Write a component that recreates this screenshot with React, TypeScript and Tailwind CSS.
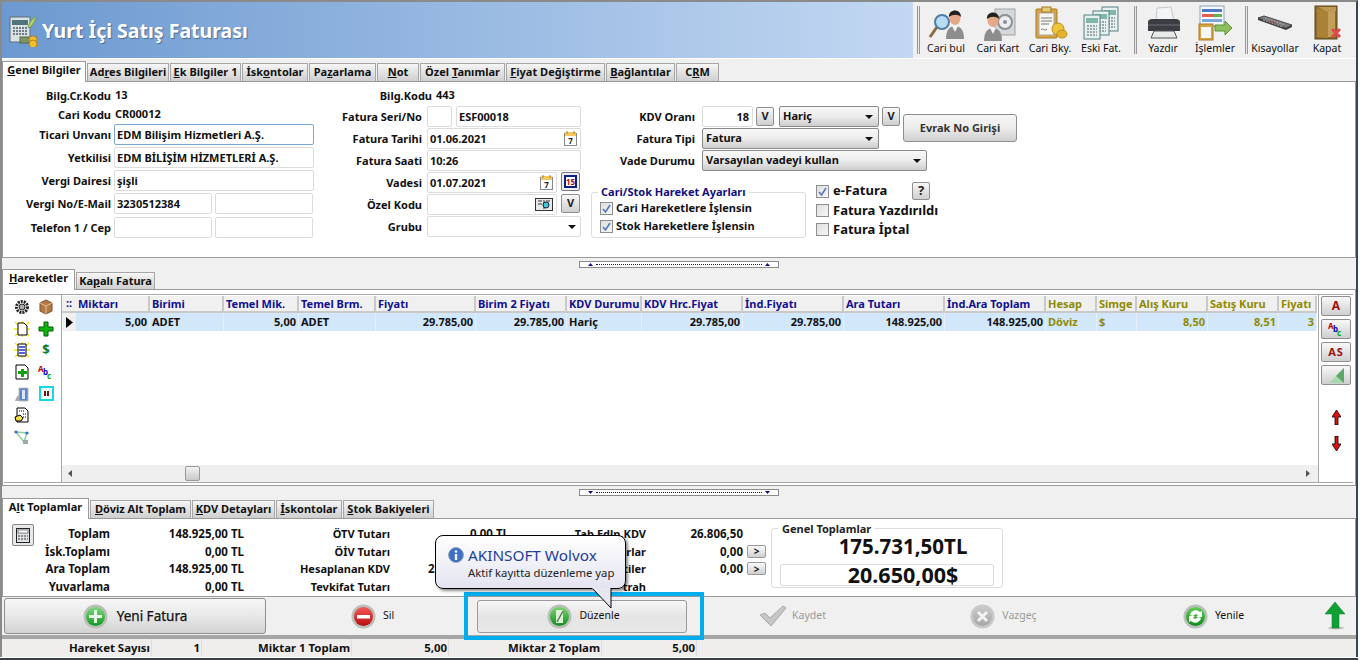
import React from "react";

const U = ({ children }: { children: React.ReactNode }) => <span className="underline">{children}</span>;

const Person = ({ x = 0 }: { x?: number }) => (
  <g transform={`translate(${x} 0)`}>
    <path d="M10 34c0-8 3-13 9-13s9 5 9 13z" fill="#8d8d8d" />
    <path d="M16 21l3 6 3-6z" fill="#f4f4f4" />
    <ellipse cx="19" cy="13" rx="5.5" ry="7" fill="#e6a988" />
    <path d="M13 12c-1-8 12-9 12 0-3-3-8-3-12 0z" fill="#23201e" />
  </g>
);

const IconCariBul = () => (
  <svg width="36" height="36" viewBox="0 0 36 36"><Person x={8} />
    <circle cx="14" cy="17" r="7" fill="#b9dcf5" stroke="#4f7fa8" strokeWidth="2" />
    <path d="M9 22L2 32" stroke="#8a6a45" strokeWidth="3" /></svg>
);
const IconCariKart = () => (
  <svg width="36" height="36" viewBox="0 0 36 36">
    <rect x="15" y="4" width="20" height="26" fill="#d5d8da" stroke="#9ea3a6" />
    <circle cx="25" cy="17" r="7" fill="#eceeef" stroke="#8c9093" strokeWidth="2" />
    <circle cx="25" cy="17" r="2" fill="#8c9093" />
    <g transform="translate(-6 2)"><Person /></g></svg>
);
const IconCariBky = () => (
  <svg width="36" height="36" viewBox="0 0 36 36">
    <rect x="4" y="4" width="21" height="29" rx="1" fill="#d9a441" stroke="#a87a26" />
    <rect x="7" y="8" width="15" height="22" fill="#f6f6f2" stroke="#aaa" />
    <rect x="10" y="2" width="9" height="5" fill="#e4cc78" stroke="#a87a26" />
    <path d="M9 13h11M9 16h11M9 19h8M9 25c2-3 3 2 6-1" stroke="#777" fill="none" />
    <circle cx="26" cy="24" r="6" fill="#eec53f" stroke="#b98d16" />
    <ellipse cx="30" cy="29" rx="5" ry="4" fill="#e3b52e" stroke="#b98d16" /></svg>
);
const Sheet = ({ x, y }: { x: number; y: number }) => (
  <g transform={`translate(${x} ${y})`}>
    <rect width="16" height="24" fill="#e6f0ee" stroke="#557f86" />
    <rect x="2" y="3" width="12" height="5" fill="#7fb7a8" />
    <path d="M3 11h10M3 14h10M3 17h10M3 20h10" stroke="#4c5f63" strokeDasharray="2 1" />
  </g>
);
const IconEskiFat = () => (
  <svg width="36" height="36" viewBox="0 0 36 36"><Sheet x={19} y={2} /><Sheet x={10} y={6} /><Sheet x={1} y={10} /></svg>
);
const IconYazdir = () => (
  <svg width="36" height="36" viewBox="0 0 36 36">
    <path d="M12 3l14-1 3 14H11z" fill="#f2f4f5" stroke="#c4c8cb" />
    <path d="M3 17c0-2 2-3 4-3h24c2 0 4 1 4 3v9H3z" fill="#3a3d42" />
    <path d="M3 20h32" stroke="#6c7075" />
    <path d="M9 26h20l3 7H6z" fill="#e8e9ea" stroke="#555" /></svg>
);
const IconIslemler = () => (
  <svg width="36" height="36" viewBox="0 0 36 36">
    <rect x="3" y="1" width="24" height="20" fill="#f5f7fb" stroke="#8ba0bd" />
    <rect x="5" y="4" width="20" height="3" fill="#4d79c7" /><rect x="5" y="9" width="12" height="3" fill="#e35d4f" /><rect x="17" y="9" width="8" height="3" fill="#62b14e" /><rect x="5" y="14" width="20" height="3" fill="#7ca7de" />
    <rect x="2" y="19" width="14" height="16" fill="#d9a441" stroke="#a87a26" /><rect x="4" y="22" width="10" height="11" fill="#f6f6f2" />
    <path d="M18 20h10v-4l7 7-7 7v-4H18z" fill="#8dc05c" stroke="#5b8f31" /></svg>
);
const IconKisayol = () => (
  <svg width="36" height="18" viewBox="0 0 36 18">
    <path d="M1 4l6-2 28 9-6 3z" fill="#7b7b7d" stroke="#4d4d4f" />
    <path d="M1 4v2l28 10 6-3v-2l-6 3z" fill="#3c3c3e" />
    <path d="M8 4l20 7M6 6l20 7" stroke="#a9a9ab" strokeDasharray="2 1" /><path d="M13 7l6 2" stroke="#b53a3a" /></svg>
);
const IconKapat = () => (
  <svg width="36" height="36" viewBox="0 0 36 36">
    <rect x="6" y="1" width="22" height="33" fill="#8d6a2a" stroke="#5f471b" />
    <path d="M8 3l11 3v27l-11-1z" fill="#a98238" /><path d="M19 4h7v28h-7z" fill="#c2a05a" /><path d="M9 2h18v4l-8 1z" fill="#bb9a55" />
    <path d="M23 24l8 8M31 24l-8 8" stroke="#e04a4a" strokeWidth="3" /></svg>
);

const TitleIcon = () => (
  <svg width="32" height="34" viewBox="0 0 32 34">
    <rect x="2" y="4" width="20" height="25" fill="#d9e1e4" stroke="#5d7078" />
    <rect x="4" y="7" width="16" height="5" fill="#52747f" />
    <path d="M5 15h14M5 18h14M5 21h14" stroke="#4f5e63" strokeWidth="1.5" strokeDasharray="2 1" />
    <path d="M20 14c2-6 6-9 8-11-1 5-3 9-7 12z" fill="#b8d86e" stroke="#7fa33c" />
    <rect x="12" y="24" width="16" height="6" fill="#7e9466" stroke="#566b42" />
    <circle cx="25" cy="27" r="4" fill="#f2bc2f" stroke="#b5861a" /><circle cx="25" cy="31" r="4" fill="#f2bc2f" stroke="#b5861a" />
  </svg>
);

const Tool = ({ label, w, icon }: { label: string; w: string; icon: React.ReactNode }) => (
  <div className={`flex flex-col items-center ${w}`}>
    <div className="flex h-[36px] items-center justify-center">{icon}</div>
    <span className="text-[10.5px] font-normal leading-[14px] text-[#111] whitespace-nowrap">{label}</span>
  </div>
);
const ToolSep = () => <div className="mx-[2px] h-[48px] w-[3px] shrink-0 border-x border-[#999] bg-[#e6e6e6]" />;

const TopBar = () => (
  <div className="flex h-[57px] border-b border-white">
    <div className="flex flex-1 items-center bg-gradient-to-r from-[#6c99d0] to-[#c3d8f2] pl-[6px]">
      <TitleIcon />
      <span className="ml-[2px] mt-[2px] text-[19.5px] font-bold text-white [text-shadow:1px_1px_1px_#4a6d99]">Yurt İçi Satış Faturası</span>
    </div>
    <div className="flex w-[443px] items-center bg-[#f0f0f0] pl-[2px]">
      <ToolSep />
      <Tool label="Cari bul" w="w-[48px]" icon={<IconCariBul />} />
      <Tool label="Cari Kart" w="w-[56px]" icon={<IconCariKart />} />
      <Tool label="Cari Bky." w="w-[48px]" icon={<IconCariBky />} />
      <Tool label="Eski Fat." w="w-[54px]" icon={<IconEskiFat />} />
      <div className="w-[4px]" />
      <ToolSep />
      <Tool label="Yazdır" w="w-[48px]" icon={<IconYazdir />} />
      <Tool label="İşlemler" w="w-[56px]" icon={<IconIslemler />} />
      <ToolSep />
      <Tool label="Kısayollar" w="w-[50px]" icon={<IconKisayol />} />
      <Tool label="Kapat" w="w-[54px]" icon={<IconKapat />} />
    </div>
  </div>
);

const TabBtn = ({ children, w, active, h = "h-[18px]" }: { children: React.ReactNode; w: string; active?: boolean; h?: string }) =>
  active ? (
    <div className={`relative z-10 -mb-px flex h-[21px] ${w} items-center justify-center border-x border-t border-[#9a9a9a] bg-white pb-[3px] text-[#111] shrink-0`}>{children}</div>
  ) : (
    <div className={`flex ${h} ${w} items-center justify-center border border-b-0 border-[#a6a6a6] bg-gradient-to-b from-[#f6f6f6] to-[#cfcfcf] text-[#111] shrink-0`}>{children}</div>
  );

const Lbl = ({ w, children }: { w: string; children: React.ReactNode }) => (
  <div className={`${w} shrink-0 text-right leading-[21px] whitespace-nowrap`}>{children}</div>
);
const Inp = ({ w, children, focus, right }: { w: string; children?: React.ReactNode; focus?: boolean; right?: boolean }) => (
  <div className={`relative flex h-[21px] ${w} shrink-0 items-center rounded-[2px] border px-[2px] leading-[19px] whitespace-nowrap bg-white ${focus ? "border-[#7aa7d6]" : "border-[#dcdcdc]"} ${right ? "justify-end pr-[3px]" : ""}`}>{children}</div>
);
const VBtn = ({ w = "w-[18px]", h = "h-[19px]", children = "V" }: { w?: string; h?: string; children?: React.ReactNode }) => (
  <div className={`flex ${w} ${h} shrink-0 items-center justify-center rounded-[2px] border border-[#8f8f8f] bg-gradient-to-b from-[#f8f8f8] to-[#cfcfcf] text-[#222]`}>{children}</div>
);
const Sel = ({ w, children }: { w: string; children?: React.ReactNode }) => (
  <div className={`flex h-[21px] ${w} shrink-0 items-center justify-between rounded-[2px] border border-[#8a8a8a] bg-gradient-to-b from-[#f8f8f8] via-[#ececec] to-[#cdcdcd] pl-[3px] pr-[5px] whitespace-nowrap`}>
    <span>{children}</span>
    <svg width="8" height="4" viewBox="0 0 8 4"><path d="M0 0h8L4 4z" fill="#111" /></svg>
  </div>
);
const Cal = ({ day = "7" }: { day?: string }) => (
  <svg width="13" height="15" viewBox="0 0 13 15" className="absolute right-[3px] top-[2px]">
    <rect x=".5" y="2.5" width="12" height="12" fill="#fff" stroke="#888" />
    <rect x="1" y="1" width="11" height="4" fill="#f3c85d" />
    <path d="M3 0v3M10 0v3" stroke="#a7882f" />
    <text x="6.5" y="13" fontSize="8" textAnchor="middle" fill="#222" fontWeight="700">{day}</text>
  </svg>
);
const Chk = ({ on }: { on?: boolean }) => (
  <div className="flex h-[13px] w-[13px] shrink-0 items-center justify-center border border-[#8f8f8f] bg-gradient-to-br from-[#dfdfdf] to-[#f6f6f6]">
    {on && <svg width="9" height="9" viewBox="0 0 9 9"><path d="M1 5l2.5 3L8 1" fill="none" stroke="#5a79b8" strokeWidth="1.6" /></svg>}
  </div>
);

const FormPanel = () => (
  <div className="flex h-[177px] items-start border border-[#9a9a9a] bg-white">
    <div className="w-[312px] shrink-0 pt-[3px]">
      <div className="flex h-[20px] items-center gap-[4px]"><Lbl w="w-[108px]">Bilg.Cr.Kodu</Lbl><span>13</span></div>
      <div className="flex h-[18px] items-center gap-[4px]"><Lbl w="w-[108px]">Cari Kodu</Lbl><span>CR00012</span></div>
      <div className="mt-[1px] flex flex-col gap-[2px]">
        <div className="flex gap-[3px]"><Lbl w="w-[108px]">Ticari Unvanı</Lbl><Inp w="w-[200px]" focus>EDM Bilişim Hizmetleri A.Ş.</Inp></div>
        <div className="flex gap-[3px]"><Lbl w="w-[108px]">Yetkilisi</Lbl><Inp w="w-[200px]">EDM BİLİŞİM HİZMETLERİ A.Ş.</Inp></div>
        <div className="flex gap-[3px]"><Lbl w="w-[108px]">Vergi Dairesi</Lbl><Inp w="w-[200px]">şişli</Inp></div>
        <div className="flex gap-[3px]"><Lbl w="w-[108px]">Vergi No/E-Mail</Lbl><Inp w="w-[98px]">3230512384</Inp><Inp w="w-[98px]" /></div>
        <div className="mt-[1px] flex gap-[3px]"><Lbl w="w-[108px]">Telefon 1 / Cep</Lbl><Inp w="w-[98px]" /><Inp w="w-[98px]" /></div>
      </div>
    </div>
    <div className="w-[267px] shrink-0 pt-[3px]">
      <div className="flex h-[20px] items-center gap-[4px]"><Lbl w="w-[117px]">Bilg.Kodu</Lbl><span>443</span></div>
      <div className="mt-[1px] flex flex-col gap-px">
        <div className="flex gap-[4px]"><Lbl w="w-[108px] pr-px">Fatura Seri/No</Lbl><Inp w="w-[25px]" /><Inp w="w-[125px]">ESF00018</Inp></div>
        <div className="flex gap-[4px]"><Lbl w="w-[108px] pr-px">Fatura Tarihi</Lbl><Inp w="w-[154px]">01.06.2021<Cal /></Inp></div>
        <div className="flex gap-[4px]"><Lbl w="w-[108px] pr-px">Fatura Saati</Lbl><Inp w="w-[154px]">10:26</Inp></div>
        <div className="flex gap-[4px]"><Lbl w="w-[108px] pr-px">Vadesi</Lbl><Inp w="w-[130px]">01.07.2021<Cal /></Inp>
          <div className="flex h-[19px] w-[19px] items-center justify-center rounded-[2px] border border-[#777] bg-[#eee]">
            <div className="flex h-[13px] w-[13px] items-center justify-center border-2 border-[#102080] bg-white text-[8px] leading-none text-[#a01010]">15</div>
          </div>
        </div>
        <div className="flex gap-[4px]"><Lbl w="w-[108px] pr-px">Özel Kodu</Lbl>
          <Inp w="w-[130px]">
            <svg width="18" height="15" viewBox="0 0 18 15" className="absolute right-[3px] top-[2px]"><rect x=".5" y="1.5" width="17" height="12" fill="#e8e8e8" stroke="#333" /><path d="M9 3v9M3 4h4M3 7h4M11 4h4" stroke="#333" /><circle cx="11" cy="8" r="3" fill="#3cc6d8" stroke="#123" /></svg>
          </Inp>
          <VBtn w="w-[19px]" />
        </div>
        <div className="flex gap-[4px]"><Lbl w="w-[108px] pr-px">Grubu</Lbl>
          <div className="flex h-[21px] w-[154px] items-center justify-end rounded-[2px] border border-[#dcdcdc] pr-[4px]"><svg width="8" height="4" viewBox="0 0 8 4"><path d="M0 0h8L4 4z" fill="#111" /></svg></div>
        </div>
      </div>
    </div>
    <div className="pt-[24px]">
      <div className="flex flex-col gap-px">
        <div className="flex h-[21px] items-start">
          <Lbl w="w-[113px]">KDV Oranı</Lbl><div className="w-[7px]" />
          <Inp w="w-[51px]" right>18</Inp><div className="ml-[3px] mt-px"><VBtn w="w-[18px]" /></div>
          <div className="ml-[5px]"><Sel w="w-[100px]">Hariç</Sel></div>
          <div className="ml-[3px] mt-px"><VBtn w="w-[18px]" /></div>
          <div className="ml-[3px] mt-[8px] flex h-[28px] w-[114px] items-center justify-center rounded-[3px] border border-[#8f8f8f] bg-gradient-to-b from-[#f6f6f6] via-[#ececec] to-[#cfcfcf] text-[#333]">Evrak No Girişi</div>
        </div>
        <div className="flex items-start"><Lbl w="w-[113px]">Fatura Tipi</Lbl><div className="w-[7px]" /><Sel w="w-[177px]">Fatura</Sel></div>
        <div className="flex items-start"><Lbl w="w-[113px]">Vade Durumu</Lbl><div className="w-[7px]" /><Sel w="w-[225px]">Varsayılan vadeyi kullan</Sel></div>
      </div>
      <div className="flex items-start">
        <div className="relative ml-[9px] mt-[21px] h-[46px] w-[215px] rounded-[3px] border border-[#dcdcdc] pl-[8px] pt-[6px]">
          <div className="absolute left-[6px] top-[-8px] bg-white px-[3px] leading-[14px] text-[#101080]">Cari/Stok Hareket Ayarları</div>
          <div className="flex h-[18px] items-center gap-[3px]"><Chk on /><span>Cari Hareketlere İşlensin</span></div>
          <div className="flex h-[18px] items-center gap-[3px]"><Chk on /><span>Stok Hareketlere İşlensin</span></div>
        </div>
        <div className="ml-[10px] mt-[10px] text-[13px]">
          <div className="flex h-[20px] items-center gap-[4px]"><Chk on /><span className="w-[75px]">e-Fatura</span><VBtn w="w-[18px]" h="h-[18px]">?</VBtn></div>
          <div className="flex h-[19px] items-center gap-[4px]"><Chk /><span>Fatura Yazdırıldı</span></div>
          <div className="flex h-[19px] items-center gap-[4px]"><Chk /><span>Fatura İptal</span></div>
        </div>
      </div>
    </div>
  </div>
);

const Splitter = ({ down }: { down?: boolean }) => (
  <div className={`flex items-start justify-center pt-[3px] ${down ? "h-[14px]" : "h-[12px]"}`}>
    <div className="flex h-[7px] w-[200px] items-center justify-between border border-[#8a8a8a] bg-white px-[8px]">
      <svg width="5" height="3" viewBox="0 0 5 3"><path d={down ? "M0 0h5L2.5 3z" : "M0 3h5L2.5 0z"} fill="#101080" /></svg>
      <div className="mx-[3px] h-0 flex-1 border-t border-dotted border-[#101080]" />
      <svg width="5" height="3" viewBox="0 0 5 3"><path d={down ? "M0 0h5L2.5 3z" : "M0 3h5L2.5 0z"} fill="#101080" /></svg>
    </div>
  </div>
);

const heads: [string, string][] = [
  ["Miktarı", "n"], ["Birimi", "n"], ["Temel Mik.", "n"], ["Temel Brm.", "n"], ["Fiyatı", "n"], ["Birim 2 Fiyatı", "n"],
  ["KDV Durumu", "n"], ["KDV Hrc.Fiyat", "n"], ["İnd.Fiyatı", "n"], ["Ara Tutarı", "n"], ["İnd.Ara Toplam", "n"],
  ["Hesap", "o"], ["Simge", "o"], ["Alış Kuru", "o"], ["Satış Kuru", "o"], ["Fiyatı", "o"],
];
const row: [string, boolean][] = [
  ["5,00", true], ["ADET", false], ["5,00", true], ["ADET", false], ["29.785,00", true], ["29.785,00", true], ["Hariç", false], ["29.785,00", true],
  ["29.785,00", true], ["148.925,00", true], ["148.925,00", true], ["Döviz", false], ["$", false], ["8,50", true], ["8,51", true], ["3", true],
];
const gridCols = "grid-cols-[14px_74px_74px_75px_77px_100px_91px_75px_101px_101px_101px_101px_51px_40px_71px_71px_38px]";

const DataGrid = () => (
  <div className="relative flex min-w-0 flex-1 flex-col border-x border-[#a8a8a8] bg-white">
    <div className="flex-1 overflow-hidden pt-[1px]">
      <div className={`grid ${gridCols} w-[1255px]`}>
        <div className="flex h-[17px] items-center justify-center border-b-2 border-[#c9c9c9] bg-[#f0f0f0] text-[#101080]">::</div>
        {heads.map(([h, c], i) => (
          <div key={i} className={`h-[17px] overflow-hidden whitespace-nowrap border-b-2 border-r-2 border-[#c9c9c9] bg-[#f0f0f0] pl-[2px] leading-[15px] ${c === "o" ? "text-[#8f8a00]" : "text-[#101090]"}`}>{h}</div>
        ))}
        <div className="flex h-[18px] items-center justify-center bg-[#f0f0f0]"><svg width="7" height="11" viewBox="0 0 7 11"><path d="M0 0l7 5.5L0 11z" fill="#000" /></svg></div>
        {row.map(([v, r], i) => (
          <div key={i} className={`h-[18px] overflow-hidden whitespace-nowrap border-r border-[#e8f1fb] bg-[#d3e7fb] px-[2px] leading-[18px] ${r ? "text-right" : ""} ${heads[i][1] === "o" ? "text-[#8f8a00]" : "text-[#111]"}`}>{v}</div>
        ))}
      </div>
    </div>
    <div className="flex h-[17px] items-center bg-[#efefef] pl-[6px] pr-[8px]">
      <svg width="4" height="7" viewBox="0 0 4 7"><path d="M4 0v7L0 3.5z" fill="#555" /></svg>
      <div className="ml-[113px] h-[15px] w-[15px] rounded-[2px] border border-[#999] bg-gradient-to-b from-[#f2f2f2] to-[#c9c9c9]" />
      <div className="flex-1" />
      <svg width="4" height="7" viewBox="0 0 4 7"><path d="M0 0v7l4-3.5z" fill="#555" /></svg>
    </div>
  </div>
);

const Sp = ({ children }: { children: React.ReactNode }) => <div className="flex h-[21.7px] w-[23px] items-center justify-center">{children}</div>;
const S16 = ({ children }: { children: React.ReactNode }) => <svg width="16" height="16" viewBox="0 0 16 16">{children}</svg>;
const Star = () => <path d="M8 0v16M0 8h16M1 1l14 14M15 1L1 15" stroke="#f0ea00" strokeWidth="1.4" />;
const Abc = () => (
  <S16><text x="0" y="8" fontSize="8" fill="#b00">A</text><text x="5" y="11" fontSize="8" fill="#00c">b</text><text x="9" y="15" fontSize="8" fill="#0a0">c</text></S16>
);

const SideIcons = () => (
  <div className="grid w-[57px] shrink-0 grid-cols-2 content-start justify-items-center pl-[6px] pr-[3px] pt-[1px]">
    <Sp><S16><circle cx="8" cy="8" r="5.5" fill="none" stroke="#222" strokeWidth="3" strokeDasharray="2 1" /><circle cx="8" cy="8" r="3" fill="#aaa" stroke="#222" /></S16></Sp>
    <Sp><S16><path d="M8 1l6 3v8l-6 3-6-3V4z" fill="#b47a45" stroke="#7a4f28" /><path d="M2 4l6 3 6-3M8 7v8" stroke="#e5c091" fill="none" /></S16></Sp>
    <Sp><S16><Star /><path d="M4 2h6l3 3v9H4z" fill="#fff" stroke="#000" /></S16></Sp>
    <Sp><S16><path d="M6 1h4v5h5v4h-5v5H6v-5H1V6h5z" fill="#0fb30f" stroke="#045f04" /></S16></Sp>
    <Sp><S16><Star /><path d="M4 2h8v12H4z" fill="#fff" stroke="#000" /><path d="M5 5h6M5 8h6M5 11h6" stroke="#1a2fd0" strokeWidth="1.6" /></S16></Sp>
    <Sp><span className="text-[13px] text-[#117a11]">$</span></Sp>
    <Sp><S16><path d="M2 1h9l3 3v11H2z" fill="#fff" stroke="#000" /><path d="M7 5h3v2h3v3h-3v3H7v-3H4V7h3z" fill="#0fa40f" /></S16></Sp>
    <Sp><Abc /></Sp>
    <Sp><S16><path d="M5 2h9v13H5z" fill="#5c86c9" stroke="#bbb" /><path d="M1 15c1-3 2-5 4-6v6z" fill="#aaa" /><rect x="8" y="4" width="3" height="9" fill="#dbe7f7" /></S16></Sp>
    <Sp><div className="flex h-[15px] w-[15px] items-center justify-center border-2 border-[#12d8e8]"><div className="flex h-[11px] w-[11px] items-center justify-center gap-px bg-white"><i className="h-[5px] w-[2px] bg-[#7a1010]" /><i className="h-[5px] w-[2px] bg-[#7a1010]" /></div></div></Sp>
    <Sp><S16><path d="M3 1h8l3 3v11H3z" fill="#fff" stroke="#000" /><path d="M5 4h5M9 7h4M9 10h4" stroke="#000" strokeDasharray="1 1" /><path d="M1 10l5-2 3 3-2 3H2z" fill="#f3dc4c" stroke="#000" /></S16></Sp>
    <div />
    <Sp><S16><path d="M2 3l11 1-3 9z" fill="none" stroke="#8ccf9f" strokeWidth="1.5" /><circle cx="2" cy="3" r="1.6" fill="#2b6fd1" /><circle cx="13" cy="4" r="1.6" fill="#2b6fd1" /><rect x="9" y="11" width="5" height="4" fill="#9aa" /></S16></Sp>
  </div>
);

const RBtn = ({ children }: { children: React.ReactNode }) => (
  <div className="flex h-[20px] w-[30px] items-center justify-center rounded-[2px] border border-[#8f8f8f] bg-gradient-to-b from-[#f8f8f8] to-[#cfcfcf]">{children}</div>
);
const RightIcons = () => (
  <div className="flex w-[34px] shrink-0 flex-col items-center gap-[3px] pt-[1px]">
    <RBtn><span className="text-[12px] text-[#9c1010]">A</span></RBtn>
    <RBtn><Abc /></RBtn>
    <RBtn><span className="text-[11px] tracking-[1px] text-[#9c1010]">AS</span></RBtn>
    <RBtn><svg width="16" height="15" viewBox="0 0 16 15"><path d="M16 0v15H1z" fill="#a6d9ae" /><path d="M16 0v15L8 8z" fill="#5aa86c" /></svg></RBtn>
    <svg width="9" height="15" viewBox="0 0 9 15" className="mt-[22px]"><path d="M4.5 0L9 7H6v8H3V7H0z" fill="#e01010" stroke="#000" strokeWidth=".8" /></svg>
    <svg width="9" height="15" viewBox="0 0 9 15" className="mt-[8px]"><path d="M4.5 15L9 8H6V0H3v8H0z" fill="#e01010" stroke="#000" strokeWidth=".8" /></svg>
  </div>
);

const Cell = ({ children }: { children?: React.ReactNode }) => <div className="h-[17.5px] leading-[17.5px] whitespace-nowrap">{children}</div>;
const SmallGt = () => <div className="ml-[4px] flex h-[13px] w-[19px] items-center justify-center rounded-[2px] border border-[#999] bg-gradient-to-b from-[#fafafa] to-[#d0d0d0] text-[10px] leading-none">&gt;</div>;

const Totals = () => (
  <div className="flex h-[79px] items-start border border-[#9a9a9a] bg-white pt-[6px] text-[11.5px]">
    <div className="relative w-[108px] shrink-0 pr-px text-right">
      <div className="absolute left-[9px] top-[-1px] flex h-[22px] w-[22px] items-center justify-center rounded-[2px] border border-[#888] bg-[#e8e8e8]">
        <svg width="14" height="15" viewBox="0 0 14 15"><rect x=".5" y=".5" width="13" height="14" fill="#dfe3e6" stroke="#222" /><rect x="2" y="2" width="10" height="3" fill="#fff" stroke="#333" strokeWidth=".6" /><path d="M2 8h10M2 11h10" stroke="#333" strokeDasharray="2 1" /></svg>
      </div>
      {["Toplam", "İsk.Toplamı", "Ara Toplam", "Yuvarlama"].map((v) => <Cell key={v}>{v}</Cell>)}
    </div>
    <div className="w-[133px] shrink-0 text-right">
      {["148.925,00 TL", "0,00 TL", "148.925,00 TL", "0,00 TL"].map((v, i) => <Cell key={i}>{v}</Cell>)}
    </div>
    <div className="w-[146px] shrink-0 text-right text-[11px]">
      {["ÖTV Tutarı", "ÖİV Tutarı", "Hesaplanan KDV", "Tevkifat Tutarı"].map((v) => <Cell key={v}>{v}</Cell>)}
    </div>
    <div className="w-[119px] shrink-0 text-right">
      <Cell>0,00 TL</Cell>
      <Cell />
      <div className="h-[17.5px] pl-[38px] text-left leading-[17.5px]">2</div>
      <Cell />
    </div>
    <div className="w-[137px] shrink-0 text-right text-[11px]">
      <Cell>Tab.Edln.KDV</Cell>
      <Cell>rlar</Cell>
      <Cell>tiler</Cell>
      <Cell>trah</Cell>
    </div>
    <div className="shrink-0">
      <div className="flex h-[17.5px] w-[120px] items-center"><span className="w-[97px] text-right leading-[17.5px]">26.806,50</span></div>
      <div className="flex h-[17.5px] w-[120px] items-center"><span className="w-[97px] text-right">0,00</span><SmallGt /></div>
      <div className="flex h-[17.5px] w-[120px] items-center"><span className="w-[97px] text-right">0,00</span><SmallGt /></div>
    </div>
    <div className="relative ml-[5px] mt-[3px] h-[60px] w-[232px] shrink-0 rounded-[3px] border border-[#dcdcdc] px-[9px]">
      <div className="absolute left-[6px] top-[-7px] bg-white px-[4px] text-[11px] leading-[14px] text-[#222]">Genel Toplamlar</div>
      <div className="mt-[5px] h-[24px] pl-[32px] text-center text-[20.5px] leading-[24px] text-[#111]">175.731,50TL</div>
      <div className="-mx-[1px] mt-[6px] h-[22px] rounded-[2px] border border-[#dcdcdc] pl-[32px] text-center text-[21.5px] leading-[20px] text-[#111]">20.650,00$</div>
    </div>
  </div>
);

const Ball = ({ a, b, children, gray }: { a: string; b: string; children: React.ReactNode; gray?: boolean }) => {
  const id = `${a}${b}`.replace(/#/g, "g");
  return (
    <svg width="25" height="25" viewBox="0 0 25 25">
      <defs><linearGradient id={id} x1="0" y1="0" x2="0" y2="1"><stop offset="0" stopColor={a} /><stop offset="1" stopColor={b} /></linearGradient></defs>
      <circle cx="12.5" cy="12.5" r="12" fill={gray ? "#c8c8c8" : "#b9bfb9"} />
      <circle cx="12.5" cy="12.5" r="9.5" fill={`url(#${id})`} />
      {children}
    </svg>
  );
};

const ActCell = ({ children, w = "w-[211px]", gap = "gap-[7px]", cls = "" }: { children: React.ReactNode; w?: string; gap?: string; cls?: string }) => (
  <div className={`flex ${w} shrink-0 items-center justify-center ${gap} text-[10.5px] font-normal ${cls}`}>{children}</div>
);

const Actions = () => (
  <div className="relative flex h-[42px] items-center border-b-[4px] border-[#a6a6a6] bg-[#f0f0f0] pl-[2px]">
    <div className="flex h-[36px] w-[262px] shrink-0 items-center justify-center gap-[9px] rounded-[3px] border border-[#8f8f8f] bg-gradient-to-b from-[#f7f7f7] via-[#e8e8e8] to-[#d2d2d2] text-[13.5px] font-normal [-webkit-text-stroke:0.25px_#111]">
      <Ball a="#7fd87f" b="#119a1e"><path d="M11 6h3v5h5v3h-5v5h-3v-5H6v-3h5z" fill="#e9f7e9" /></Ball>
      <span>Yeni Fatura</span>
    </div>
    <ActCell cls="ml-[1px]">
      <Ball a="#f45a5a" b="#b80c0c"><rect x="6" y="11" width="13" height="3.5" fill="#fff" /></Ball><span>Sil</span>
    </ActCell>
    <ActCell w="w-[207px]">
      <div className="relative">
        <div className="absolute bottom-[-7px] left-[-13px] right-[-17px] top-[-8px] border-[4px] border-[#00aeef]" />
        <div className="flex h-[33px] w-[210px] items-center justify-center gap-[7px] rounded-[3px] border border-[#9a9a9a] bg-gradient-to-b from-[#f7f7f7] via-[#e4e4e4] to-[#e8e8e8] pl-[4px]">
          <Ball a="#78d66f" b="#108f1c"><path d="M9 6h7v13H9z" fill="#dff2d8" /><path d="M10 18l6-11" stroke="#4c7a46" strokeWidth="1.4" /></Ball><span>Düzenle</span>
        </div>
      </div>
    </ActCell>
    <ActCell w="w-[215px]" gap="gap-[5px]" cls="text-[#9a9a9a]">
      <svg width="28" height="22" viewBox="0 0 28 22"><path d="M1 10l5-2 5 5L24 1l3 2-15 18z" fill="#c6c6c6" stroke="#a8a8a8" /></svg><span>Kaydet</span>
    </ActCell>
    <ActCell w="w-[207px]" cls="text-[#9a9a9a]">
      <Ball a="#c9c9c9" b="#a6a6a6" gray><path d="M8 8l9 9M17 8l-9 9" stroke="#f2f2f2" strokeWidth="3" /></Ball><span>Vazgeç</span>
    </ActCell>
    <ActCell w="w-[213px]">
      <Ball a="#62cf57" b="#0e8c18"><path d="M7 11a6 6 0 0 1 10-3l2-1v6h-6l2-2a3.5 3.5 0 0 0-5 1zM18 14a6 6 0 0 1-10 3l-2 1v-6h6l-2 2a3.5 3.5 0 0 0 5-1z" fill="#fff" /></Ball><span>Yenile</span>
    </ActCell>
    <svg width="20" height="28" viewBox="0 0 20 28" className="ml-[5px]"><ellipse cx="11" cy="26" rx="8" ry="1.5" fill="#bbb" /><path d="M10 0l10 12h-6v14H7V12H0z" fill="#11a035" stroke="#0a7a25" strokeWidth=".5" /></svg>
  </div>
);

const Stat = ({ w, children }: { w: string; children: React.ReactNode }) => (
  <div className={`${w} h-full border-r border-[#dedede] pr-[1px] text-right leading-[17px] whitespace-nowrap`}>{children}</div>
);
const StatusBar = () => (
  <div className="flex h-[17px] items-center bg-[#f0eded] text-[11.4px]">
    <Stat w="w-[150px]">Hareket Sayısı</Stat>
    <Stat w="w-[50px]">1</Stat>
    <Stat w="w-[150px]">Miktar 1 Toplam</Stat>
    <Stat w="w-[97px]">5,00</Stat>
    <Stat w="w-[153px]">Miktar 2 Toplam</Stat>
    <Stat w="w-[95px]">5,00</Stat>
  </div>
);

const Tooltip = () => (
  <div className="absolute left-[435px] top-[535px] z-20 h-[54px] w-[191px] rounded-[8px] border border-black bg-gradient-to-b from-white to-[#e3e4f0] pl-[12px] pt-[10px] font-normal shadow-[2px_2px_3px_rgba(0,0,0,0.45)]">
    <div className="flex items-center gap-[4px] text-[15.3px] leading-[18px] text-[#1d3f9a]">
      <svg width="16" height="16" viewBox="0 0 16 16"><circle cx="8" cy="8" r="7.5" fill="#3f6fc4" stroke="#9ab" /><circle cx="8" cy="4.5" r="1.3" fill="#fff" /><rect x="6.8" y="7" width="2.4" height="6" fill="#fff" /></svg>
      <span>AKINSOFT Wolvox</span>
    </div>
    <div className="ml-[20px] mt-[1px] whitespace-nowrap text-[11.3px] leading-[15px] text-[#222]">Aktif kayıtta düzenleme yap</div>
    <svg width="22" height="24" viewBox="0 0 22 24" className="absolute left-[155px] top-[51px]">
      <path d="M1 1h19v20z" fill="#e6e7f1" /><path d="M2 2l18 19V1" fill="none" stroke="#000" />
    </svg>
  </div>
);

export default function App() {
  return (
    <div className="relative h-[660px] w-[1360px] overflow-hidden bg-white font-['Noto_Sans',sans-serif] text-[11px] font-bold text-[#111]">
      <div className="h-[657px] w-[1358px] border-l-2 border-r-2 border-t-2 border-l-[#8a8a8a] border-r-[#33485f] border-t-[#8a8a8a] bg-[#f0f0f0]">
        <TopBar />
        <div className="flex h-[22px] items-end gap-[1px] pt-[3px]">
          <TabBtn w="w-[84px]" active><span><U>G</U>enel Bilgiler</span></TabBtn>
          <TabBtn w="w-[82px]"><span>Ad<U>r</U>es Bilgileri</span></TabBtn>
          <TabBtn w="w-[71px]"><span><U>E</U>k Bilgiler 1</span></TabBtn>
          <TabBtn w="w-[66px]"><span>İsk<U>o</U>ntolar</span></TabBtn>
          <TabBtn w="w-[67px]"><span>Pa<U>z</U>arlama</span></TabBtn>
          <TabBtn w="w-[42px]"><span><U>N</U>ot</span></TabBtn>
          <TabBtn w="w-[85px]"><span>Özel <U>T</U>anımlar</span></TabBtn>
          <TabBtn w="w-[99px]"><span><U>F</U>iyat Değiştirme</span></TabBtn>
          <TabBtn w="w-[69px]"><span><U>B</U>ağlantılar</span></TabBtn>
          <TabBtn w="w-[43px]"><span>C<U>R</U>M</span></TabBtn>
        </div>
        <FormPanel />
        <Splitter />
        <div className="flex h-[19px] items-end gap-px">
          <TabBtn w="w-[73px]" active><span><U>H</U>areketler</span></TabBtn>
          <TabBtn w="w-[79px]" h="h-[17px]"><span>Ka<U>p</U>alı Fatura</span></TabBtn>
        </div>
        <div className="flex h-[197px] flex-col border border-[#9a9a9a] bg-white pb-[2px] pl-[1px] pr-[2px] pt-[4px]">
          <div className="flex min-h-0 flex-1 border-y border-[#a8a8a8]">
            <SideIcons />
            <DataGrid />
            <RightIcons />
          </div>
        </div>
        <Splitter down />
        <div className="flex h-[18px] items-end gap-px">
          <TabBtn w="w-[87px]" active><span>A<U>l</U>t Toplamlar</span></TabBtn>
          <TabBtn w="w-[101px]"><span><U>D</U>öviz Alt Toplam</span></TabBtn>
          <TabBtn w="w-[83px]"><span><U>K</U>DV Detayları</span></TabBtn>
          <TabBtn w="w-[66px]"><span><U>İ</U>skontolar</span></TabBtn>
          <TabBtn w="w-[91px]"><span><U>S</U>tok Bakiyeleri</span></TabBtn>
        </div>
        <Totals />
        <Actions />
        <StatusBar />
      </div>
      <div className="mt-px h-[2px] w-[1358px] bg-[#3a3f45]" />
      <Tooltip />
    </div>
  );
}
